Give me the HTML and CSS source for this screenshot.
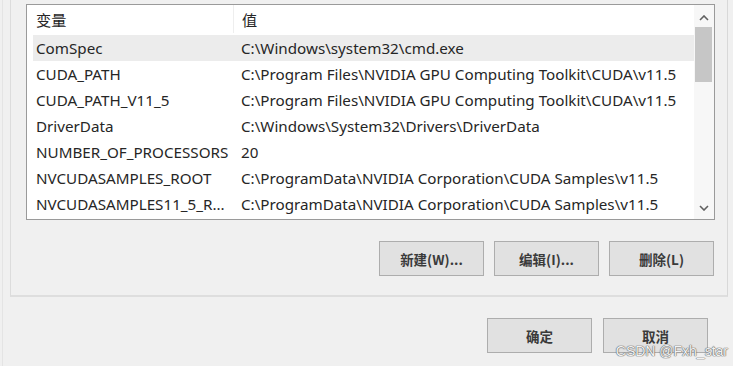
FILE: index.html
```html
<!DOCTYPE html>
<html lang="zh-CN">
<head>
    <meta charset="UTF-8">
    <meta name="viewport" content="width=device-width, initial-scale=1.0">
    <title>环境变量</title>
    <link rel="stylesheet" href="styles.css">
</head>
<body>
    <div class="group">
        <!-- 变量列表 -->
        <div class="listview">
            <div class="list">
                <div class="row header">
                    <span class="col-name">变量</span>
                    <span class="col-value">值</span>
                </div>
                <div class="row selected">
                    <span class="col-name">ComSpec</span>
                    <span class="col-value">C:\Windows\system32\cmd.exe</span>
                </div>
                <div class="row">
                    <span class="col-name">CUDA_PATH</span>
                    <span class="col-value">C:\Program Files\NVIDIA GPU Computing Toolkit\CUDA\v11.5</span>
                </div>
                <div class="row">
                    <span class="col-name">CUDA_PATH_V11_5</span>
                    <span class="col-value">C:\Program Files\NVIDIA GPU Computing Toolkit\CUDA\v11.5</span>
                </div>
                <div class="row">
                    <span class="col-name">DriverData</span>
                    <span class="col-value">C:\Windows\System32\Drivers\DriverData</span>
                </div>
                <div class="row">
                    <span class="col-name">NUMBER_OF_PROCESSORS</span>
                    <span class="col-value">20</span>
                </div>
                <div class="row">
                    <span class="col-name">NVCUDASAMPLES_ROOT</span>
                    <span class="col-value">C:\ProgramData\NVIDIA Corporation\CUDA Samples\v11.5</span>
                </div>
                <div class="row">
                    <span class="col-name">NVCUDASAMPLES11_5_R...</span>
                    <span class="col-value">C:\ProgramData\NVIDIA Corporation\CUDA Samples\v11.5</span>
                </div>
            </div>
            <div class="scrollbar">
                <svg class="arrow" width="10" height="6" viewBox="0 0 10 6"><path d="M1 5 L5 1 L9 5" fill="none" stroke="#606060" stroke-width="1.6"/></svg>
                <div class="track"><div class="thumb"></div></div>
                <svg class="arrow" width="10" height="6" viewBox="0 0 10 6"><path d="M1 1 L5 5 L9 1" fill="none" stroke="#606060" stroke-width="1.6"/></svg>
            </div>
        </div>

        <div class="buttons">
            <button class="btn">新建(W)...</button>
            <button class="btn">编辑(I)...</button>
            <button class="btn">删除(L)</button>
        </div>
    </div>

    <div class="footer">
        <button class="btn">确定</button>
        <button class="btn">取消</button>
        <span class="watermark">CSDN @Fxh_star</span>
    </div>
</body>
</html>
```

FILE: styles.css
```css
/* Reset básico */
body, div, span, button {
    margin: 0;
    padding: 0;
    box-sizing: border-box;
}

body {
    font-family: "Noto Sans", "Noto Sans CJK SC", sans-serif;
    background-color: #f0f0f0;
    color: #262626;
    width: 733px;
    height: 366px;
    overflow: hidden;
    padding-left: 10px;
    border-left: 1px solid #e4e4e4;
    margin-left: 2px;
}

/* Grupo com a lista */
.group {
    width: 718px;
    height: 297px;
    padding: 4px 12px 0 15px;
    border-right: 1px solid #d8d8d8;
    border-left: 1px solid #dcdcdc;
    border-bottom: 2px solid #dedede;
    margin-left: -3px;
}

.listview {
    display: flex;
    height: 216px;
    background-color: #ffffff;
    border: 1px solid #9a9a9a;
}

.list {
    flex: 1;
    padding-left: 6px;
}

.row {
    display: flex;
    height: 26px;
    align-items: center;
    font-size: 15.2px;
    white-space: nowrap;
}

.row.header {
    height: 30px;
    padding-bottom: 2px;
}

.row.selected {
    background-color: #ececec;
}

.col-name {
    width: 200px;
    padding-left: 3px;
    overflow: hidden;
}

.col-value {
    padding-left: 8px;
}

.header .col-value {
    border-left: 1px solid #eeeeee;
    height: 100%;
    display: flex;
    align-items: center;
}

/* Barra de rolagem */
.scrollbar {
    width: 20px;
    display: flex;
    flex-direction: column;
    align-items: center;
    background-color: #f7f7f7;
    padding: 10px 0 8px;
}

.arrow {
    flex: none;
}

.track {
    flex: 1;
    width: 100%;
    padding: 6px 2px 0 1px;
}

.thumb {
    height: 55px;
    background-color: #c6c6c6;
}

/* Botões */
.buttons {
    display: flex;
    justify-content: flex-end;
    gap: 10px;
    margin-top: 21px;
    margin-right: 1px;
}

.btn {
    width: 105px;
    height: 35px;
    background-color: #e1e1e1;
    border: 1px solid #adadad;
    font-family: "Noto Sans CJK SC", sans-serif;
    font-size: 13.5px;
    font-weight: bold;
    color: #3a3a3a;
}

.footer {
    position: relative;
    display: flex;
    justify-content: flex-end;
    gap: 11px;
    margin-top: 21px;
    padding-right: 27px;
}

.watermark {
    position: absolute;
    right: 7px;
    top: 25px;
    font-family: "Liberation Sans", sans-serif;
    font-size: 14px;
    color: #f2f2f2;
    text-shadow: 0 0 1px #666666, 0 0 1px #666666, 0 0 1px #666666;
}
```
